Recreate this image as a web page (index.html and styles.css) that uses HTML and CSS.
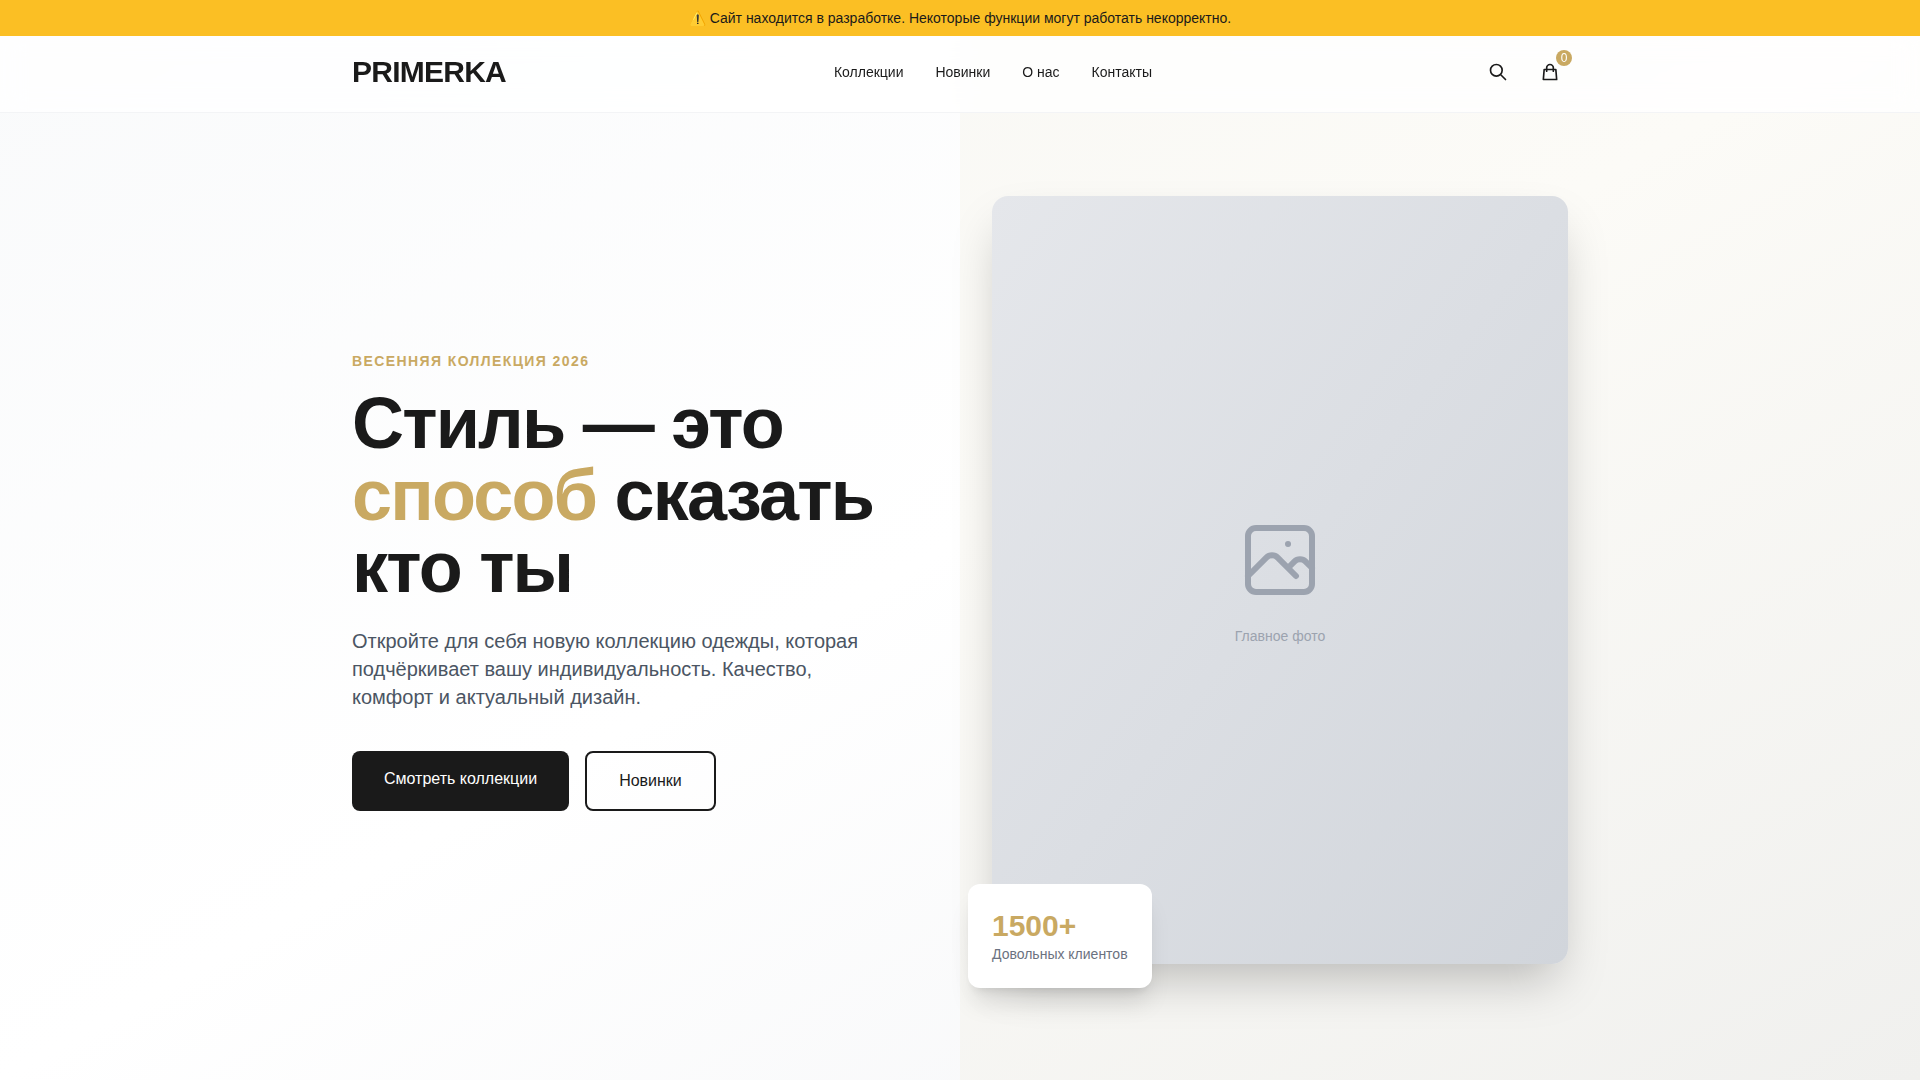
FILE: index.html
```html
<!DOCTYPE html>
<html lang="ru">
<head>
    <meta charset="UTF-8">
    <meta name="viewport" content="width=device-width, initial-scale=1.0">
    <title>PRIMERKA</title>
    <link rel="stylesheet" href="styles.css">
</head>
<body>
    <div class="notice">⚠️ Сайт находится в разработке. Некоторые функции могут работать некорректно.</div>

    <header class="header">
        <div class="container header-inner">
            <a href="#" class="logo">PRIMERKA</a>
            <nav class="nav">
                <a href="#collections">Коллекции</a>
                <a href="#new">Новинки</a>
                <a href="#about">О нас</a>
                <a href="#contacts">Контакты</a>
            </nav>
            <div class="header-actions">
                <button type="button" class="icon-btn" aria-label="Поиск">
                    <svg width="20" height="20" viewBox="0 0 24 24" fill="none" stroke="currentColor" stroke-width="2" stroke-linecap="round" stroke-linejoin="round">
                        <path d="M21 21l-6-6m2-5a7 7 0 11-14 0 7 7 0 0114 0z"/>
                    </svg>
                </button>
                <button type="button" class="icon-btn" aria-label="Корзина">
                    <svg width="20" height="20" viewBox="0 0 24 24" fill="none" stroke="currentColor" stroke-width="2" stroke-linecap="round" stroke-linejoin="round">
                        <path d="M16 11V7a4 4 0 00-8 0v4M5 9h14l1 12H4L5 9z"/>
                    </svg>
                    <span class="cart-count">0</span>
                </button>
            </div>
        </div>
    </header>

    <main>
        <section class="hero">
            <div class="container hero-grid">
                <div class="hero-content">
                    <p class="hero-label">Весенняя коллекция 2026</p>
                    <h1 class="hero-title">Стиль — это <span class="accent">способ</span> сказать кто ты</h1>
                    <p class="hero-text">Откройте для себя новую коллекцию одежды, которая подчёркивает вашу индивидуальность. Качество, комфорт и актуальный дизайн.</p>
                    <div class="hero-buttons">
                        <a href="#collections" class="btn btn-primary">Смотреть коллекции</a>
                        <a href="#new" class="btn btn-outline">Новинки</a>
                    </div>
                </div>

                <div class="hero-visual">
                    <div class="hero-image">
                        <svg width="96" height="96" viewBox="0 0 24 24" fill="none" stroke="currentColor" stroke-width="1.5" stroke-linecap="round" stroke-linejoin="round">
                            <path d="M4 16l4.586-4.586a2 2 0 012.828 0L16 16m-2-2l1.586-1.586a2 2 0 012.828 0L20 14m-6-6h.01M6 20h12a2 2 0 002-2V6a2 2 0 00-2-2H6a2 2 0 00-2 2v12a2 2 0 002 2z"/>
                        </svg>
                        <span>Главное фото</span>
                    </div>
                    <div class="stat-card">
                        <p class="stat-value">1500+</p>
                        <p class="stat-label">Довольных клиентов</p>
                    </div>
                </div>
            </div>
        </section>
    </main>
</body>
</html>
```
FILE: styles.css
```css
* {
    margin: 0;
    padding: 0;
    box-sizing: border-box;
}

body {
    font-family: "Liberation Sans", Arial, sans-serif;
    line-height: 1.5;
    color: #1a1a1a;
    background: #fff;
}

a {
    color: inherit;
    text-decoration: none;
}

.container {
    width: 100%;
    max-width: 1280px;
    margin: 0 auto;
    padding: 0 32px;
}

/* Top notice */
.notice {
    position: fixed;
    top: 0;
    left: 0;
    right: 0;
    z-index: 20;
    padding: 8px 16px;
    background: #fbbf24;
    font-size: 14px;
    line-height: 20px;
    text-align: center;
}

/* Header */
.header {
    position: fixed;
    top: 32px;
    left: 0;
    right: 0;
    z-index: 10;
    background: rgba(255, 255, 255, 0.8);
    border-bottom: 1px solid #f3f4f6;
    backdrop-filter: blur(12px);
}

.header-inner {
    display: flex;
    align-items: center;
    justify-content: space-between;
    padding-top: 20px;
    padding-bottom: 20px;
}

.logo {
    font-size: 30px;
    font-weight: 700;
    line-height: 40px;
    letter-spacing: -0.025em;
}

.nav {
    display: flex;
    gap: 32px;
    font-size: 14px;
}

.header-actions {
    display: flex;
    gap: 16px;
}

.icon-btn {
    position: relative;
    display: flex;
    padding: 8px;
    border: none;
    background: none;
    color: inherit;
    cursor: pointer;
}

.cart-count {
    position: absolute;
    top: -4px;
    right: -4px;
    display: flex;
    align-items: center;
    justify-content: center;
    width: 16px;
    height: 16px;
    border-radius: 50%;
    background: #c9a962;
    color: #fff;
    font-family: "Liberation Sans", Arial, sans-serif;
    font-size: 12px;
}

/* Hero */
.hero {
    position: relative;
    display: flex;
    align-items: center;
    min-height: 100vh;
    padding-top: 80px;
    background: linear-gradient(to bottom right, #f9fafb, #fff, #f3f4f6);
    overflow: hidden;
}

.hero::before {
    content: '';
    position: absolute;
    top: 0;
    right: 0;
    width: 50%;
    height: 100%;
    background: rgba(201, 169, 98, 0.05);
}

.hero-grid {
    position: relative;
    display: grid;
    grid-template-columns: 1fr 1fr;
    gap: 64px;
    align-items: center;
}

.hero-label {
    margin-bottom: 14px;
    color: #c9a962;
    font-size: 14px;
    font-weight: 700;
    line-height: 24px;
    letter-spacing: 0.1em;
    text-transform: uppercase;
}

.hero-title {
    margin-bottom: 24px;
    font-size: 72px;
    line-height: 72px;
    letter-spacing: -0.025em;
}

.accent {
    color: #c9a962;
}

.hero-text {
    max-width: 512px;
    margin-bottom: 40px;
    color: #4b5563;
    font-size: 20px;
    line-height: 28px;
}

.hero-buttons {
    display: flex;
    gap: 16px;
}

.btn {
    padding: 16px 32px;
    border-radius: 8px;
    font-size: 16px;
    line-height: 24px;
}

.btn-primary {
    background: #1a1a1a;
    color: #fff;
}

.btn-outline {
    border: 2px solid #1a1a1a;
}

.hero-visual {
    position: relative;
}

.hero-image {
    display: flex;
    flex-direction: column;
    align-items: center;
    justify-content: center;
    gap: 16px;
    aspect-ratio: 3 / 4;
    border-radius: 16px;
    background: linear-gradient(to bottom right, #e5e7eb, #d1d5db);
    box-shadow: 0 25px 50px -12px rgba(0, 0, 0, 0.25);
    color: #9ca3af;
    font-size: 14px;
    line-height: 24px;
}

.stat-card {
    position: absolute;
    left: -24px;
    bottom: -24px;
    padding: 24px;
    border-radius: 12px;
    background: #fff;
    box-shadow: 0 20px 25px -5px rgba(0, 0, 0, 0.1), 0 8px 10px -6px rgba(0, 0, 0, 0.1);
}

.stat-value {
    color: #c9a962;
    font-size: 30px;
    font-weight: 700;
    line-height: 36px;
}

.stat-label {
    color: #6b7280;
    font-size: 14px;
    line-height: 20px;
}
```
